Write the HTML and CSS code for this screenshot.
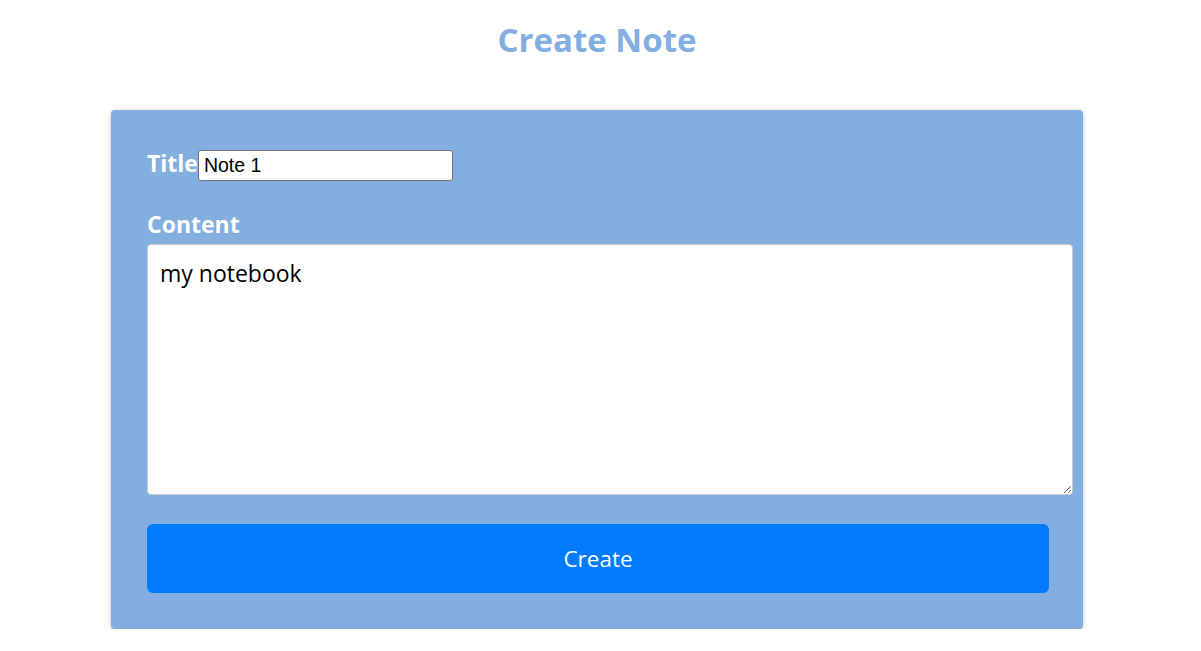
FILE: index.html
```html
<!DOCTYPE html>
<html lang="en">
<head>
<meta charset="utf-8">
<title>Create Note</title>
<link rel="stylesheet" href="styles.css">
</head>
<body>
<main class="page">
  <h1 class="page-title">Create Note</h1>
  <form class="note-card">
    <div class="title-row">
      <label class="field-label" for="title">Title</label>
      <input class="title-input" id="title" type="text" value="Note 1">
    </div>
    <label class="field-label content-label" for="content">Content</label>
    <textarea class="content-input" id="content">my notebook</textarea>
    <button class="create-btn" type="button">Create</button>
  </form>
</main>
</body>
</html>
```

FILE: styles.css
```css
html, body {
  margin: 0;
  padding: 0;
  background: #ffffff;
}

body {
  font-family: "Open Sans", "Noto Sans", sans-serif;
}

.page {
  width: 972px;
  margin-left: 111px;
}

.page-title {
  margin: 20px 0 50px;
  font-size: 33px;
  line-height: 40px;
  font-weight: 700;
  color: #82aee0;
  text-align: center;
}

.note-card {
  display: flex;
  flex-direction: column;
  align-items: flex-start;
  background: #82aee0;
  border-radius: 4px;
  box-shadow: 0 1px 4px rgba(0, 0, 0, 0.25);
  padding: 38px 34px 36px 36px;
}

.title-row {
  display: flex;
  align-items: baseline;
  height: 31px;
}

.field-label {
  color: #ffffff;
  font-size: 23px;
  font-weight: 700;
  line-height: 30px;
}

.title-input {
  box-sizing: border-box;
  width: 255px;
  height: 31px;
  margin: 0;
  padding: 1px 5px;
  border: 1px solid #767676;
  border-radius: 3px;
  background: #ffffff;
  font-family: "Liberation Sans", Arial, sans-serif;
  font-size: 19.5px;
  color: #000000;
}

.content-label {
  margin-top: 26px;
  line-height: 39px;
}

.content-input {
  box-sizing: border-box;
  width: 926px;
  height: 251px;
  margin: 0;
  padding: 12px;
  border: 1px solid #c9c9c9;
  border-radius: 4px;
  background: #ffffff;
  font-family: "Open Sans", "Noto Sans", sans-serif;
  font-size: 23px;
  line-height: 32px;
  color: #000000;
  resize: vertical;
}

.create-btn {
  box-sizing: border-box;
  width: 902px;
  height: 69px;
  margin-top: 29px;
  border: none;
  border-radius: 6px;
  background: #007bff;
  color: #ffffff;
  font-family: "Open Sans", "Noto Sans", sans-serif;
  font-size: 22.5px;
  cursor: pointer;
}
```
